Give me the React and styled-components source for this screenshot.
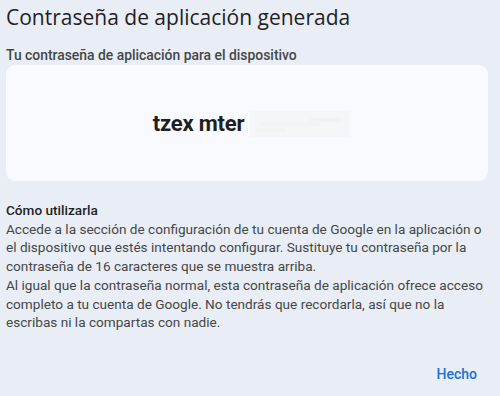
import React from "react";
import styled, { createGlobalStyle } from "styled-components";

const Global = createGlobalStyle`
  html, body { margin: 0; padding: 0; background: #e9eef6; }
  body { font-family: Roboto, "Noto Sans", Arial, sans-serif; }
`;

const Dialog = styled.div`
  width: 500px;
  height: 396px;
  box-sizing: border-box;
  padding: 3px 12px 0 6px;
  display: flex;
  flex-direction: column;
  background: #e9eef6;
  color: #1f1f1f;
`;

const Title = styled.h1`
  margin: 0;
  font-family: "Open Sans", Roboto, sans-serif;
  font-weight: 400;
  font-size: 21px;
  line-height: 28px;
  color: #1f1f1f;
  letter-spacing: 0;
`;

const Label = styled.div`
  margin-top: 16px;
  font-size: 13.9px;
  line-height: 16px;
  font-weight: 500;
  color: #444746;
`;

const Card = styled.div`
  margin-top: 2px;
  height: 116px;
  background: #f8faff;
  border-radius: 9px;
  display: flex;
  align-items: center;
  justify-content: center;
  gap: 6px;
  padding-left: 8px;
`;

const Password = styled.span`
  font-size: 22px;
  font-weight: 700;
  color: #1f1f1f;
  letter-spacing: -0.2px;
`;

const Hidden = styled.span`
  position: relative;
  width: 99px;
  height: 26px;
  background: #f5f6f7;
  margin-top: 2px;
`;

const Smudge = styled.i`
  position: absolute;
  left: ${(p) => p.$l}px;
  top: ${(p) => p.$t}px;
  width: ${(p) => p.$w}px;
  height: 2px;
  background: #eef0f2;
  filter: blur(1px);
`;

const Section = styled.div`
  margin-top: 20px;
  font-size: 13.6px;
  line-height: 18.7px;
  color: #444746;
`;

const SectionTitle = styled.div`
  font-weight: 500;
  color: #1f1f1f;
`;

const Para = styled.p`
  margin: 0;
`;

const Footer = styled.div`
  margin-top: auto;
  height: 30px;
  display: flex;
  justify-content: flex-end;
  align-items: flex-start;
  padding-right: 11px;
`;

const Button = styled.button`
  border: none;
  background: transparent;
  padding: 0;
  font-family: Roboto, sans-serif;
  font-size: 14px;
  font-weight: 500;
  color: #1b6fd8;
  cursor: pointer;
`;

export default function App() {
  return (
    <>
      <Global />
      <Dialog>
        <Title>Contraseña de aplicación generada</Title>
        <Label>Tu contraseña de aplicación para el dispositivo</Label>
        <Card>
          <Password>tzex mter</Password>
          <Hidden>
            <Smudge $l={10} $t={12} $w={60} />
            <Smudge $l={6} $t={18} $w={30} />
            <Smudge $l={60} $t={8} $w={30} />
          </Hidden>
        </Card>
        <Section>
          <SectionTitle>Cómo utilizarla</SectionTitle>
          <Para>
            Accede a la sección de configuración de tu cuenta de Google en la aplicación o
            el dispositivo que estés intentando configurar. Sustituye tu contraseña por la
            contraseña de 16 caracteres que se muestra arriba.
          </Para>
          <Para>
            Al igual que la contraseña normal, esta contraseña de aplicación ofrece acceso
            completo a tu cuenta de Google. No tendrás que recordarla, así que no la
            escribas ni la compartas con nadie.
          </Para>
        </Section>
        <Footer>
          <Button>Hecho</Button>
        </Footer>
      </Dialog>
    </>
  );
}
